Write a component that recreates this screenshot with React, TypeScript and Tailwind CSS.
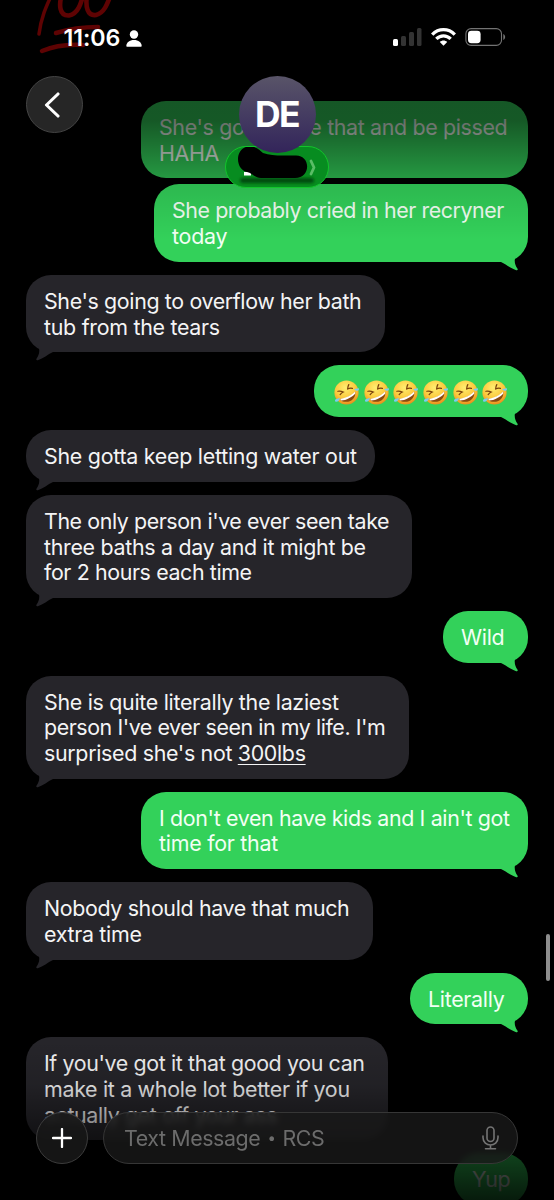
import { clsx } from 'clsx';

interface Line {
  text: string;
  tracking: string;
}

interface Message {
  from: 'me' | 'them';
  lines?: Line[];
  laughs?: number;
  tail?: boolean;
  underline?: string;
  width: string;
  space: string;
}

const messages: Message[] = [
  {
    from: 'me',
    lines: [
      { text: "She's gonna see that and be pissed", tracking: 'tracking-[-0.35px]' },
      { text: 'HAHA', tracking: 'tracking-[-0.35px]' },
    ],
    width: 'w-[387px]',
    space: '',
  },
  {
    from: 'me',
    lines: [
      { text: 'She probably cried in her recryner', tracking: 'tracking-[-0.43px]' },
      { text: 'today', tracking: 'tracking-[-0.2px]' },
    ],
    tail: true,
    width: 'w-[374px]',
    space: 'mt-[6px]',
  },
  {
    from: 'them',
    lines: [
      { text: "She's going to overflow her bath", tracking: 'tracking-[-0.36px]' },
      { text: 'tub from the tears', tracking: 'tracking-[-0.28px]' },
    ],
    tail: true,
    width: 'w-[359px]',
    space: 'mt-[13.2px]',
  },
  { from: 'me', laughs: 6, tail: true, width: 'w-[214px]', space: 'mt-[13px]' },
  {
    from: 'them',
    lines: [{ text: 'She gotta keep letting water out', tracking: 'tracking-[-0.26px]' }],
    tail: true,
    width: 'w-[349px]',
    space: 'mt-[13px]',
  },
  {
    from: 'them',
    lines: [
      { text: "The only person i've ever seen take", tracking: 'tracking-[-0.42px]' },
      { text: 'three baths a day and it might be', tracking: 'tracking-[-0.3px]' },
      { text: 'for 2 hours each time', tracking: 'tracking-[-0.38px]' },
    ],
    tail: true,
    width: 'w-[386px]',
    space: 'mt-[13px]',
  },
  {
    from: 'me',
    lines: [{ text: 'Wild', tracking: 'tracking-[-0.3px]' }],
    tail: true,
    width: 'w-[85px]',
    space: 'mt-[13px]',
  },
  {
    from: 'them',
    lines: [
      { text: 'She is quite literally the laziest', tracking: 'tracking-[-0.3px]' },
      { text: "person I've ever seen in my life. I'm", tracking: 'tracking-[-0.43px]' },
      { text: "surprised she's not 300lbs", tracking: 'tracking-[-0.32px]' },
    ],
    underline: '300lbs',
    tail: true,
    width: 'w-[383px]',
    space: 'mt-[13px]',
  },
  {
    from: 'me',
    lines: [
      { text: "I don't even have kids and I ain't got", tracking: 'tracking-[-0.35px]' },
      { text: 'time for that', tracking: 'tracking-[-0.25px]' },
    ],
    tail: true,
    width: 'w-[387px]',
    space: 'mt-[13px]',
  },
  {
    from: 'them',
    lines: [
      { text: 'Nobody should have that much', tracking: 'tracking-[-0.35px]' },
      { text: 'extra time', tracking: 'tracking-[-0.3px]' },
    ],
    tail: true,
    width: 'w-[347px]',
    space: 'mt-[13px]',
  },
  {
    from: 'me',
    lines: [{ text: 'Literally', tracking: 'tracking-[-0.3px]' }],
    tail: true,
    width: 'w-[118px]',
    space: 'mt-[13px]',
  },
  {
    from: 'them',
    lines: [
      { text: "If you've got it that good you can", tracking: 'tracking-[-0.37px]' },
      { text: 'make it a whole lot better if you', tracking: 'tracking-[-0.31px]' },
      { text: 'actually get off your ass', tracking: 'tracking-[-0.38px]' },
    ],
    width: 'w-[362px]',
    space: 'mt-[13px]',
  },
  {
    from: 'me',
    lines: [{ text: 'Yup', tracking: 'tracking-[-0.4px]' }],
    width: 'w-[74px]',
    space: 'mt-[13px]',
  },
];

function LaughIcon() {
  return (
    <svg viewBox="0 0 24 24" className="size-[25px] shrink-0">
      <defs>
        <radialGradient id="face" cx="0.45" cy="0.3" r="0.72">
          <stop offset="0" stopColor="#ffee70" />
          <stop offset="0.6" stopColor="#fcc93c" />
          <stop offset="1" stopColor="#e88a1b" />
        </radialGradient>
      </defs>
      <circle cx="12" cy="12" r="11.6" fill="url(#face)" />
      <path d="M5.5 18.2C10.5 18.2 17 15 20.3 11C21.3 15.5 18.3 19.9 13.5 20.8C10 21.4 7 20.6 5.5 18.2Z" fill="#8a4a10" />
      <path d="M5.8 18.2C10.8 17.8 16.8 14.7 20.2 11.1L20.4 12.9C17.2 16.6 11.8 19.4 7 19.7Z" fill="#fff" />
      <path d="M3.8 10.8C5.6 10.4 7.3 10.8 8.9 11.5C7.7 12.1 6.7 12.9 5.9 14M14.2 4.4C13.4 5.8 13.1 7 13.1 8.5C14.5 7.9 16 7.7 17.7 8" fill="none" stroke="#7b420c" strokeWidth="1.2" strokeLinecap="round" />
      <path d="M19.4 8.6L24 7.8C24.4 9.2 23.5 10.2 21.8 10.2C20.8 10.1 20 9.5 19.4 8.6ZM5.6 17.2C5.4 19.5 3.7 21.2 1.6 20.8C0.4 20.2 1 18.7 2.1 18.2Z" fill="#7ccaf0" />
    </svg>
  );
}

function Tail({ mine }: { mine: boolean }) {
  return (
    <svg
      viewBox="0 0 28 19"
      className={clsx('absolute -bottom-[9px] h-[19px] w-[28px]', mine ? 'right-0 -scale-x-100 fill-[#33d15a]' : 'left-0 fill-[#26252a]')}
    >
      <path d="M7 0C10.5 2.8 13.2 5 13.3 8.5C13.3 12 12 14.5 10.6 16.6C9.8 18 10.6 18.6 11.8 18.2C17.5 16.4 21.5 12.6 27 10V0Z" />
    </svg>
  );
}

function Bubble({ message }: { message: Message }) {
  const mine = message.from === 'me';

  return (
    <div
      className={clsx(
        'relative shrink-0 rounded-[25px] px-[18px] pt-[14px] pb-[12px] text-[21.4px] leading-[25.7px] whitespace-nowrap',
        mine ? 'self-end bg-[#33d15a] text-[#f2fff4]' : 'self-start bg-[#26252a] text-[#f4f4f5]',
        message.width,
        message.space,
      )}
    >
      {message.lines?.map(({ text, tracking }) => {
        const plain = message.underline ? text.replace(message.underline, '') : text;
        return (
          <p key={text} className={tracking}>
            {plain}
            {plain !== text && <span className="underline decoration-1 underline-offset-[3px]">{message.underline}</span>}
          </p>
        );
      })}
      {message.laughs && (
        <div className="flex h-[25.7px] items-center gap-[4.7px] pl-[2px]">
          {Array.from({ length: message.laughs }, (_, i) => (
            <LaughIcon key={i} />
          ))}
        </div>
      )}
      {message.tail && <Tail mine={mine} />}
    </div>
  );
}

function StatusBar() {
  return (
    <div className="relative flex h-[76px] items-start justify-between pt-[24px] pr-[48px] pl-[63.5px]">
      <svg viewBox="0 0 120 60" className="absolute top-0 left-0 h-[60px] w-[120px]" fill="none" stroke="#5e0303" strokeLinecap="round">
        <path d="M51 -4C46 7 41 18 39 34" strokeWidth="3.5" />
        <path d="M64 -12C57 6 60 16 69 15.5C78 14 81 4 84 -8M88 -10C84 8 88 16 96 15C104 13 107 5 111 -6" strokeWidth="4.6" />
        <path d="M56 33C69 29 82 27 98 27M42 51C54 46 67 44 83 45" strokeWidth="4.5" />
      </svg>
      <div className="relative flex items-center gap-[6px]">
        <span className="text-[23.2px] leading-[28px] font-semibold tracking-[-0.05px] text-white">11:06</span>
        <svg viewBox="0 0 16 17" className="h-[17px] w-[16px] fill-white">
          <circle cx="8" cy="4.5" r="4.2" />
          <path d="M0.3 16C0.3 12.6 3.6 10 8 10C12.4 10 15.7 12.6 15.7 16Q15.7 16.7 14.9 16.7H1.1Q0.3 16.7 0.3 16Z" />
        </svg>
      </div>
      <div className="flex items-center gap-[9px] pt-[4px]">
        <svg viewBox="0 0 29 18" className="h-[18px] w-[29px]">
          <rect x="0" y="11" width="5" height="7" rx="1.5" fill="#fff" />
          <rect x="8" y="8" width="5" height="10" rx="1.5" fill="#333" />
          <rect x="16" y="4" width="5" height="14" rx="1.5" fill="#333" />
          <rect x="24" y="0" width="4.5" height="18" rx="1.5" fill="#333" />
        </svg>
        <svg viewBox="0 0 25 18" className="h-[18px] w-[25px]" fill="none" stroke="#fff" strokeWidth="3.3">
          <path d="M1.2 6.6C7.6 0 17.4 0 23.8 6.6M5.3 10.9C9.4 6.8 15.6 6.8 19.7 10.9" />
          <path d="M12.5 17.8L8.8 14.1C10.9 12.1 14.1 12.1 16.2 14.1Z" fill="#fff" stroke="none" />
        </svg>
        <svg viewBox="0 0 41 18" className="h-[18px] w-[41px]">
          <rect x="0.9" y="0.6" width="35.6" height="16.8" rx="5.2" fill="none" stroke="#737373" strokeWidth="1.1" />
          <rect x="3" y="2.8" width="12.6" height="12.4" rx="3.4" fill="#fff" />
          <path d="M38.3 6C40.7 7 40.7 11 38.3 12Z" fill="#737373" />
        </svg>
      </div>
    </div>
  );
}

function ChatHeader() {
  return (
    <header className="absolute inset-x-0 top-0">
      <StatusBar />
      <div className="flex items-start pl-[26px]">
        <button className="flex size-[57px] items-center justify-center rounded-full border border-[#444] bg-[#262626]">
          <svg viewBox="0 0 16 26" className="mr-[5px] h-[26px] w-[16px]" fill="none" stroke="#fff" strokeWidth="3.1" strokeLinecap="round" strokeLinejoin="round">
            <path d="M14 2L2.5 13L14 24" />
          </svg>
        </button>
        <div className="ml-[142px] flex w-[104px] flex-col items-center">
          <div className="z-10 flex size-[77px] items-center justify-center rounded-full bg-linear-to-b from-[#595468] to-[#33245a] text-[35.5px] font-bold tracking-[-1.5px] text-white">
            DE
          </div>
          <div className="-mt-[7px] h-[42px] w-[104px] rounded-full border border-[#12c52b] bg-[#078c20]">
            <svg viewBox="1 1 102 40" className="h-[40px] w-[102px]">
              <defs>
                <filter id="soft" x="-20%" y="-100%" width="140%" height="300%">
                  <feGaussianBlur stdDeviation="1.5" />
                </filter>
              </defs>
              <rect x="15" y="32" width="74" height="5" rx="2.5" fill="#034a0e" filter="url(#soft)" />
              <rect x="19" y="26" width="7" height="3.5" fill="#fff" />
              <path d="M13 13C13 6 18 0 25 0.5C32 0.5 35 5 38 7C44 9 50 9.5 58 9.5H71C86 9.5 86 32 70 32H36C30 32 27 27 22 26C17 25 13 20 13 13Z" fill="#000" />
              <path d="M86 15L89 21.5L86 28" fill="none" stroke="#5abd66" strokeWidth="2.8" strokeLinecap="round" strokeLinejoin="round" />
            </svg>
          </div>
        </div>
      </div>
    </header>
  );
}

function Composer() {
  return (
    <footer className="absolute inset-x-0 top-[1112px] flex items-center gap-[15px] pr-[36px] pl-[36px]">
      <button className="flex size-[52px] shrink-0 items-center justify-center rounded-full border border-[#3c3c3c] bg-[#171717]/90 backdrop-blur-[3px]">
        <svg viewBox="0 0 20 20" className="size-[20px]" stroke="#fff" strokeWidth="2.3" strokeLinecap="round">
          <path d="M10 1V19M1 10H19" />
        </svg>
      </button>
      <div className="flex h-[52px] grow items-center justify-between rounded-full border border-[#363636] bg-[#191919]/80 pr-[18px] pl-[20px] backdrop-blur-[3px]">
        <div className="flex items-center gap-[7px] text-[21.4px] tracking-[-0.4px] text-[#6c6c6c]">
          <span>Text Message</span>
          <span className="text-[15px]">•</span>
          <span>RCS</span>
        </div>
        <svg viewBox="0 0 17 24" className="h-[24px] w-[17px]" fill="none" stroke="#747474" strokeWidth="1.6" strokeLinecap="round">
          <rect x="5" y="1" width="7" height="14.5" rx="3.5" />
          <path d="M1 10V11.5C1 21.5 16 21.5 16 11.5V10M8.5 19V22.8M3.5 22.8H13.5" />
        </svg>
      </div>
    </footer>
  );
}

export default function App() {
  return (
    <div className="relative h-[1200px] w-[554px] overflow-hidden bg-black font-[Inter,sans-serif]">
      <main className="flex flex-col px-[26px] pt-[101px]">
        {messages.map((message, index) => (
          <Bubble key={index} message={message} />
        ))}
      </main>
      <div className="absolute inset-x-0 top-0 h-[240px] bg-[linear-gradient(to_bottom,rgba(0,0,0,.6)_0px,rgba(0,0,0,.58)_120px,rgba(0,0,0,.27)_178px,rgba(0,0,0,.12)_184px,transparent_240px)]" />
      <div className="absolute inset-x-0 bottom-0 h-[160px] bg-[linear-gradient(to_bottom,transparent_0px,rgba(0,0,0,.12)_45px,rgba(0,0,0,.4)_80px,rgba(0,0,0,.7)_118px,rgba(0,0,0,.87)_160px)]" />
      <ChatHeader />
      <Composer />
      <div className="absolute top-[934px] right-[4px] h-[47px] w-[4px] rounded-full bg-[#8e8e8e]" />
    </div>
  );
}
